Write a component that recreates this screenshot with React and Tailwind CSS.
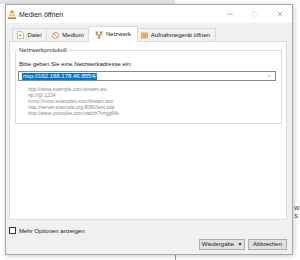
import { Minus, Square, X, ChevronDown } from "lucide-react";

const examples = [
  "http://www.example.com/stream.avi",
  "rtp://@:1234",
  "mms://mms.examples.com/stream.asx",
  "rtsp://server.example.org:8080/test.sdp",
  "http://www.yourtube.com/watch?v=gg64x",
];

function VlcIcon() {
  return (
    <svg width="8" height="9" viewBox="0 0 16 18">
      <path d="M6 1h4l5 14H1z" fill="#f08a00" />
      <path d="M5 6h6l1 3H4z" fill="#fff" />
      <path d="M3 11h10l1 3H2z" fill="#fff" />
      <rect x="0" y="15" width="16" height="3" rx="1" fill="#e07800" />
    </svg>
  );
}

function FileIcon() {
  return (
    <svg width="7" height="8" viewBox="0 0 14 16">
      <path d="M1 1h8l4 4v10H1z" fill="#fff" stroke="#9a9a9a" strokeWidth="1.2" />
      <path d="M5 6l5 3-5 3z" fill="#f08a00" />
    </svg>
  );
}

function DiscIcon() {
  return (
    <svg width="7" height="7" viewBox="0 0 14 14">
      <circle cx="7" cy="7" r="6" fill="#fff" stroke="#c87a2a" strokeWidth="1.5" />
      <path d="M3 4l8 6" stroke="#e08a30" strokeWidth="2" />
    </svg>
  );
}

function NetIcon() {
  return (
    <svg width="8" height="8" viewBox="0 0 16 16">
      <rect x="1" y="1" width="5" height="4" fill="#d9822b" />
      <rect x="10" y="1" width="5" height="4" fill="#d9822b" />
      <path d="M3.5 5v3h9V5M8 8v4" stroke="#8a5a20" strokeWidth="1.6" fill="none" />
      <rect x="5" y="12" width="6" height="3" fill="#d9822b" />
    </svg>
  );
}

function CaptureIcon() {
  return (
    <svg width="7" height="7" viewBox="0 0 14 14">
      <rect x="1" y="2" width="12" height="10" fill="#f5c26b" stroke="#c8862a" strokeWidth="1.2" />
      <rect x="4" y="5" width="6" height="4" fill="#e8952f" />
    </svg>
  );
}

export default function App() {
  const tabs = [
    { label: "Datei", icon: <FileIcon />, w: "w-[35px]" },
    { label: "Medium", icon: <DiscIcon />, w: "w-[43px]" },
    { label: "Netzwerk", icon: <NetIcon />, w: "w-[50px]", active: true },
    { label: "Aufnahmegerät öffnen", icon: <CaptureIcon />, w: "w-[80px]" },
  ];

  return (
    <div className="relative w-[300px] h-[260px] overflow-hidden bg-white font-['Liberation_Sans',Arial,sans-serif] text-[#1a1a1a]">
      {/* desktop behind the dialog */}
      <div className="absolute left-0 top-0 w-[175px] h-[4px] bg-[#e4e4e4]" />
      <div className="absolute left-[175px] top-[255px] w-px h-[5px] bg-[#9a9a9a]" />
      <div className="absolute left-[294px] top-[204px] text-[6px] leading-[8px] text-[#333]">W<br />S</div>

      {/* dialog window */}
      <div className="absolute left-[5px] top-[4px] w-[288px] h-[251px] flex flex-col border border-[#a8a8a8] bg-[#f0f0f0] shadow-[1px_1px_5px_rgba(0,0,0,0.22)]">
        <div className="h-[18px] flex items-center bg-white">
          <div className="ml-[2px] flex items-center"><VlcIcon /></div>
          <span className="ml-[3px] text-[7px] leading-none">Medien öffnen</span>
          <div className="ml-auto flex items-center text-[#333]">
            <div className="w-[25px] flex justify-center"><Minus size={8} strokeWidth={1.2} /></div>
            <div className="w-[25px] flex justify-center"><Square size={6} strokeWidth={1.2} className="text-[#bbb]" /></div>
            <div className="w-[25px] flex justify-center"><X size={8} strokeWidth={1.2} /></div>
          </div>
        </div>

        <div className="flex-1 flex flex-col pl-[3px] pr-[5px] pt-[5px]">
          <div className="flex items-end h-[13px] pl-[3px]">
            {tabs.map((t) =>
              t.active ? (
                <div key={t.label} className={`relative z-10 -mx-[2px] -mb-px h-[16px] ${t.w} flex items-center justify-center gap-[3px] border border-b-0 border-[#d9d9d9] bg-white text-[6px]`}>
                  {t.icon}
                  <span>{t.label}</span>
                </div>
              ) : (
                <div key={t.label} className={`h-[13px] ${t.w} flex items-center justify-center gap-[3px] border border-b-0 border-l-0 first:border-l border-[#d9d9d9] bg-[#f0f0f0] text-[6px]`}>
                  {t.icon}
                  <span>{t.label}</span>
                </div>
              )
            )}
          </div>

          <div className="h-[179px] border border-[#d9d9d9] bg-white pt-[8px] pl-[5px] pr-[4px]">
            <div className="relative h-[74px] border border-[#dcdcdc] px-[2px] pt-[9px]">
              <span className="absolute left-[2px] -top-[4px] bg-white px-[1px] text-[6px] leading-[7px] text-[#333]">Netzwerkprotokoll</span>
              <div className="pl-[1px] text-[6px] leading-[8px]">Bitte geben Sie eine Netzwerkadresse ein:</div>
              <div className="mt-[3px] mr-[3px] h-[10px] flex items-center border border-[#8a8a8a] bg-white pl-[3px] pr-[3px]">
                <span className="bg-[#0078d7] px-[1px] text-[6px] leading-[7px] text-white">rtsp://192.168.178.46:8554/</span>
                <ChevronDown size={6} strokeWidth={1.5} className="ml-auto text-[#555]" />
              </div>
              <div className="mt-[5px] pl-[10px] text-[5px] leading-[6px] text-[#8a8a8a]">
                {examples.map((e) => (
                  <div key={e}>{e}</div>
                ))}
              </div>
            </div>
          </div>

          <div className="mt-[7px] flex items-center">
            <div className="w-[7px] h-[7px] border border-[#333] bg-white" />
            <span className="ml-[3px] text-[6px] leading-none">Mehr Optionen anzeigen</span>
          </div>

          <div className="mt-[5px] flex justify-end gap-[3px]">
            <div className="h-[11px] w-[46px] flex items-center border border-[#adadad] bg-[#e1e1e1] text-[6px]">
              <span className="flex-1 text-center">Wiedergabe</span>
              <span className="w-[8px] flex justify-center text-[5px]">▼</span>
            </div>
            <div className="h-[11px] w-[39px] flex items-center justify-center border border-[#adadad] bg-[#e1e1e1] text-[6px]">
              Abbrechen
            </div>
          </div>
        </div>
      </div>
    </div>
  );
}
